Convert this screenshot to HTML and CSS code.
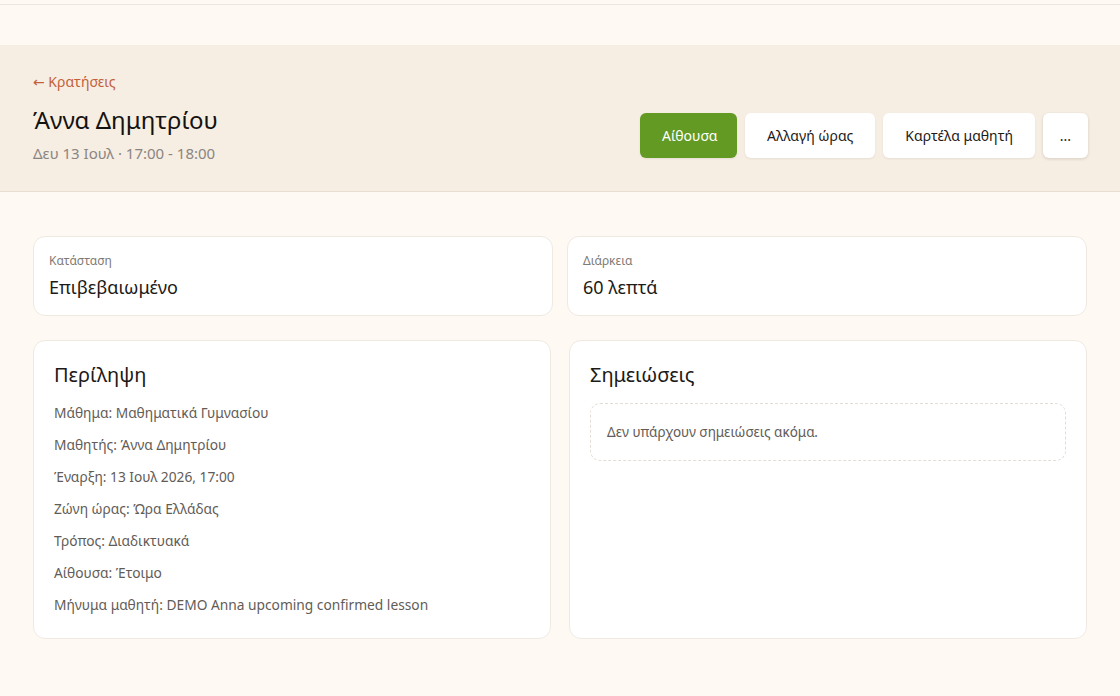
FILE: index.html
```html
<!DOCTYPE html>
<html lang="el">
<head>
    <meta charset="UTF-8">
    <meta name="viewport" content="width=device-width, initial-scale=1.0">
    <title>Κράτηση</title>
    <link rel="stylesheet" href="styles.css">
</head>
<body>

    <div class="topbar"></div>

    <div class="band">
        <div class="band-left">
            <a class="back" href="#">&larr; Κρατήσεις</a>
            <h1>Άννα Δημητρίου</h1>
            <div class="when">Δευ 13 Ιουλ · 17:00 - 18:00</div>
        </div>
        <div class="actions">
            <button class="btn primary">Αίθουσα</button>
            <button class="btn">Αλλαγή ώρας</button>
            <button class="btn">Καρτέλα μαθητή</button>
            <button class="btn more">...</button>
        </div>
    </div>

    <div class="main">
        <div class="stats">
            <div class="stat">
                <div class="label">Κατάσταση</div>
                <div class="value">Επιβεβαιωμένο</div>
            </div>
            <div class="stat">
                <div class="label">Διάρκεια</div>
                <div class="value">60 λεπτά</div>
            </div>
        </div>

        <div class="panels">
            <div class="panel">
                <h2>Περίληψη</h2>
                <p>Μάθημα: Μαθηματικά Γυμνασίου</p>
                <p>Μαθητής: Άννα Δημητρίου</p>
                <p>Έναρξη: 13 Ιουλ 2026, 17:00</p>
                <p>Ζώνη ώρας: Ώρα Ελλάδας</p>
                <p>Τρόπος: Διαδικτυακά</p>
                <p>Αίθουσα: Έτοιμο</p>
                <p>Μήνυμα μαθητή: DEMO Anna upcoming confirmed lesson</p>
            </div>
            <div class="panel">
                <h2>Σημειώσεις</h2>
                <div class="empty">Δεν υπάρχουν σημειώσεις ακόμα.</div>
            </div>
        </div>
    </div>

</body>
</html>
```

FILE: styles.css
```css
* {
    box-sizing: border-box;
}
body {
    margin: 0;
    background: #fff9f4;
    font-family: "Noto Sans", "DejaVu Sans", sans-serif;
    color: #1d1a17;
}
.topbar {
    height: 5px;
    border-bottom: 1px solid #ece6df;
    margin-bottom: 40px;
}
.band {
    background: #f6ede3;
    border-bottom: 1px solid #eaddd0;
    padding: 27px 32px 28px 33px;
    display: flex;
    justify-content: space-between;
    align-items: flex-end;
}
.back {
    display: block;
    color: #c35f3b;
    text-decoration: none;
    font-size: 14px;
    line-height: 20px;
}
h1 {
    margin: 12px 0 0;
    font-size: 24px;
    font-weight: 400;
    line-height: 32px;
    color: #141210;
}
.when {
    margin-top: 7px;
    font-size: 15px;
    color: #8b8580;
    line-height: 20px;
}
.actions {
    display: flex;
    gap: 8px;
    margin-bottom: 5px;
}
.btn {
    font-family: inherit;
    font-size: 14px;
    height: 45px;
    padding: 0 22px;
    border: none;
    border-radius: 6px;
    background: #fff;
    color: #1d1a17;
    box-shadow: 0 1px 2px rgba(80, 60, 40, 0.08);
}
.btn.primary {
    background: #629a24;
    color: #fff;
    width: 97px;
}
.btn.more {
    width: 45px;
    padding: 0;
    box-shadow: 0 1px 3px rgba(80, 60, 40, 0.18);
}
.main {
    padding: 44px 33px 40px 33px;
}
.stats {
    display: grid;
    grid-template-columns: 1fr 1fr;
    gap: 14px;
}
.stat {
    background: #fff;
    border: 1px solid #f0e9e2;
    border-radius: 12px;
    padding: 16px 15px 16px;
    height: 80px;
}
.label {
    font-size: 12px;
    color: #807a75;
    line-height: 16px;
}
.value {
    font-size: 18px;
    margin-top: 6px;
    line-height: 24px;
}
.panels {
    display: grid;
    grid-template-columns: 1fr 1fr;
    gap: 18px;
    margin-top: 24px;
}
.panel {
    background: #fff;
    border: 1px solid #f0e9e2;
    border-radius: 12px;
    padding: 20px 20px 20px;
    height: 299px;
}
h2 {
    margin: 0 0 8px;
    font-size: 20px;
    font-weight: 400;
    line-height: 28px;
}
.panel p {
    margin: 0;
    font-size: 13.75px;
    color: #625c57;
    line-height: 32px;
}
.empty {
    margin-top: 14px;
    border: 1px dashed #e4ddd6;
    border-radius: 10px;
    padding: 18px 16px;
    font-size: 13.5px;
    color: #625c57;
    line-height: 20px;
}
```
